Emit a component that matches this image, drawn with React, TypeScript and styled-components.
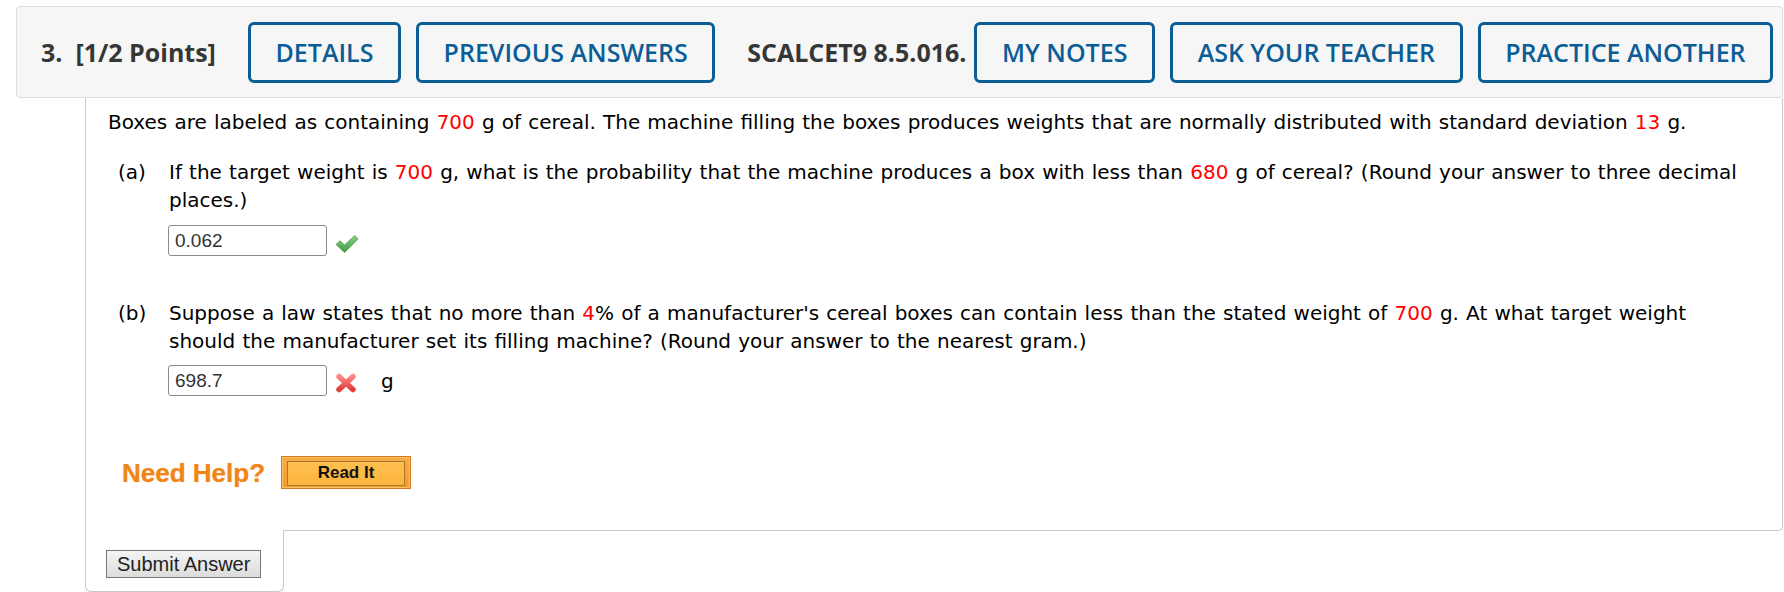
import styled, { createGlobalStyle } from "styled-components";

const GlobalStyle = createGlobalStyle`
  html, body {
    margin: 0;
    padding: 0;
    background: #fff;
  }
  body {
    font-family: "DejaVu Sans", Verdana, sans-serif;
    color: #000;
  }
`;

const SPage = styled.div`
  width: 1767px;
  padding: 6px 0 0 16px;
`;

const SHeader = styled.div`
  box-sizing: border-box;
  height: 92px;
  display: flex;
  align-items: center;
  padding-left: 24px;
  background: #f6f6f6;
  border: 1px solid #dcdcdc;
  border-radius: 4px;
  font-family: "Open Sans", sans-serif;
`;

const SHeaderLabel = styled.span<{ $gap?: number; $after?: number }>`
  margin-left: ${(p) => p.$gap ?? 0}px;
  margin-right: ${(p) => p.$after ?? 0}px;
  font-size: 25px;
  font-weight: 700;
  color: #363636;
  white-space: pre;
`;

const SHeaderButton = styled.button<{ $gap: number }>`
  box-sizing: border-box;
  height: 61px;
  margin-left: ${(p) => p.$gap}px;
  padding: 0 24.6px;
  border: 3px solid #0b5d96;
  border-radius: 6px;
  background: transparent;
  color: #0b5d96;
  font-family: "Open Sans", sans-serif;
  font-size: 25px;
  font-weight: 600;
  white-space: nowrap;
  cursor: pointer;
`;

const SBody = styled.div`
  margin-left: 69px;
  padding: 10px 16px 41px 22px;
  border: 1px solid #c8c8c8;
  border-top: none;
  border-radius: 0 0 5px 0;
  font-size: 20px;
  line-height: 28px;
  word-spacing: 0.8px;
`;

const SNum = styled.span`
  color: #f00;
`;

const SPart = styled.div<{ $top: number }>`
  display: grid;
  grid-template-columns: 51px 1fr;
  margin: ${(p) => p.$top}px 0 0 10px;
`;

const SAnswerRow = styled.div<{ $top: number }>`
  display: flex;
  align-items: center;
  margin-top: ${(p) => p.$top}px;
`;

const SInput = styled.input`
  box-sizing: border-box;
  width: 159px;
  height: 31px;
  margin: 0 0 0 -1px;
  padding: 0 6px;
  border: 1px solid #8a8a8a;
  border-radius: 3px;
  font-family: "Liberation Sans", Arial, sans-serif;
  font-size: 19px;
  color: #333;
  background: #fff;
`;

const SMark = styled.svg<{ $drop: number }>`
  margin: ${(p) => p.$drop}px 0 0 8px;
`;

const SUnit = styled.span`
  margin-left: 24px;
`;

const SHelpRow = styled.div`
  display: flex;
  align-items: center;
  gap: 16px;
  margin: 60px 0 0 14px;
`;

const SNeedHelp = styled.span`
  font-family: "Liberation Sans", Arial, sans-serif;
  font-size: 26px;
  font-weight: 700;
  color: #f0861a;
  word-spacing: 0;
  text-shadow: 0 0 1px rgba(240, 134, 26, 0.6);
`;

const SReadIt = styled.button`
  box-sizing: border-box;
  width: 130px;
  height: 33px;
  padding: 4px 5px;
  border: 1px solid #cf7a22;
  background: linear-gradient(#f8ab45, #f39a30);
  box-shadow: inset 0 0 0 1px #ffc061;
  cursor: pointer;

  span {
    display: block;
    height: 23px;
    border: 1px solid #a8782e;
    background: linear-gradient(#ffc04f, #fdb43d);
    font-family: "Liberation Sans", Arial, sans-serif;
    font-size: 17px;
    font-weight: 700;
    line-height: 21px;
    color: #111;
  }
`;

const SSubmitTab = styled.div`
  position: relative;
  box-sizing: border-box;
  width: 199px;
  height: 62px;
  margin: -1px 0 0 69px;
  padding: 20px 0 0 20px;
  background: #fff;
  border: 1px solid #c8c8c8;
  border-top: none;
  border-radius: 0 0 6px 6px;
`;

const SSubmit = styled.button`
  box-sizing: border-box;
  height: 28px;
  padding: 0 10px;
  border: 1px solid #767676;
  background: linear-gradient(#f4f4f4, #dcdcdc);
  font-family: "Liberation Sans", Arial, sans-serif;
  font-size: 20px;
  color: #222;
  cursor: pointer;
`;

function CheckMark() {
  return (
    <SMark $drop={6} width="24" height="20" viewBox="0 0 24 20">
      <defs>
        <linearGradient id="ok" x1="0" y1="0" x2="0" y2="1">
          <stop offset="0" stopColor="#8fd48c" />
          <stop offset="1" stopColor="#3f9a3c" />
        </linearGradient>
      </defs>
      <path
        d="M1 10.5 L5 6.8 L9.5 11 L19.8 1.5 L23 5 L9.6 18.6 Z"
        fill="url(#ok)"
        stroke="#4d9a49"
        strokeWidth="0.8"
        strokeLinejoin="round"
      />
    </SMark>
  );
}

function CrossMark() {
  return (
    <SMark $drop={4} width="22" height="20" viewBox="0 0 22 20">
      <defs>
        <linearGradient id="bad" x1="0" y1="0" x2="0" y2="1">
          <stop offset="0" stopColor="#ff8a8a" />
          <stop offset="1" stopColor="#e23c3c" />
        </linearGradient>
      </defs>
      <g stroke="url(#bad)" strokeWidth="5.5" strokeLinecap="round">
        <line x1="4" y1="3.5" x2="18" y2="16.5" />
        <line x1="18" y1="3.5" x2="4" y2="16.5" />
      </g>
    </SMark>
  );
}

const headerButtons = [
  { label: "DETAILS", gap: 32 },
  { label: "PREVIOUS ANSWERS", gap: 15 },
];

const headerButtonsRight = [
  { label: "MY NOTES", gap: 0 },
  { label: "ASK YOUR TEACHER", gap: 15 },
  { label: "PRACTICE ANOTHER", gap: 15 },
];

export default function App() {
  return (
    <>
      <GlobalStyle />
      <SPage>
        <SHeader>
          <SHeaderLabel>{"3.  [1/2 Points]"}</SHeaderLabel>
          {headerButtons.map((b) => (
            <SHeaderButton key={b.label} $gap={b.gap}>
              {b.label}
            </SHeaderButton>
          ))}
          <SHeaderLabel $gap={32} $after={8}>
            SCALCET9 8.5.016.
          </SHeaderLabel>
          {headerButtonsRight.map((b) => (
            <SHeaderButton key={b.label} $gap={b.gap}>
              {b.label}
            </SHeaderButton>
          ))}
        </SHeader>

        <SBody>
          <div>
            Boxes are labeled as containing <SNum>700</SNum> g of cereal. The
            machine filling the boxes produces weights that are normally
            distributed with standard deviation <SNum>13</SNum> g.
          </div>

          <SPart $top={22}>
            <span>(a)</span>
            <div>
              If the target weight is <SNum>700</SNum> g, what is the
              probability that the machine produces a box with less than{" "}
              <SNum>680</SNum> g of cereal? (Round your answer to three decimal
              <br />
              places.)
              <SAnswerRow $top={11}>
                <SInput defaultValue="0.062" readOnly />
                <CheckMark />
              </SAnswerRow>
            </div>
          </SPart>

          <SPart $top={43}>
            <span>(b)</span>
            <div>
              Suppose a law states that no more than <SNum>4</SNum>% of a
              manufacturer's cereal boxes can contain less than the stated
              weight of <SNum>700</SNum> g. At what target weight
              <br />
              should the manufacturer set its filling machine? (Round your
              answer to the nearest gram.)
              <SAnswerRow $top={10}>
                <SInput defaultValue="698.7" readOnly />
                <CrossMark />
                <SUnit>g</SUnit>
              </SAnswerRow>
            </div>
          </SPart>

          <SHelpRow>
            <SNeedHelp>Need Help?</SNeedHelp>
            <SReadIt>
              <span>Read It</span>
            </SReadIt>
          </SHelpRow>
        </SBody>

        <SSubmitTab>
          <SSubmit>Submit Answer</SSubmit>
        </SSubmitTab>
      </SPage>
    </>
  );
}
